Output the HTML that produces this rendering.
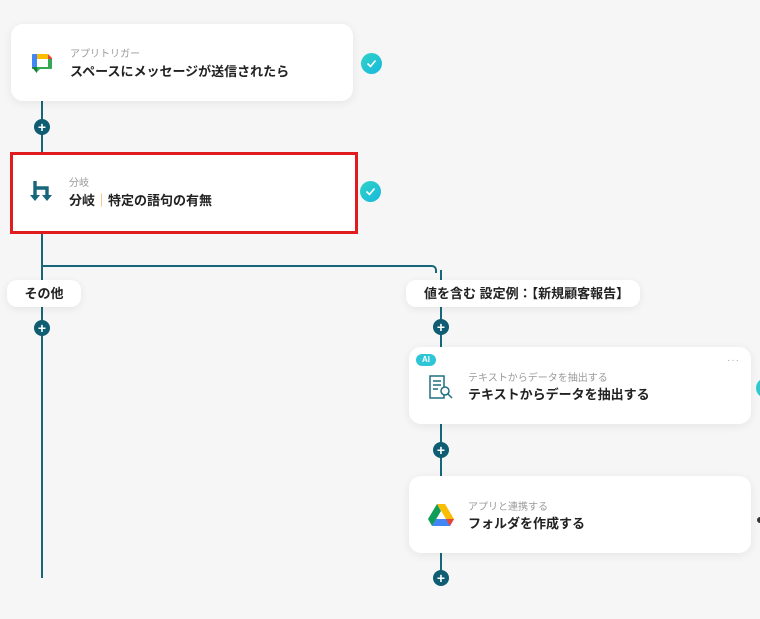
<!DOCTYPE html>
<html><head><meta charset="utf-8"><style>
body{margin:0;width:760px;height:619px;background:#f6f6f6;position:relative;overflow:hidden;font-family:"Liberation Sans","Noto Sans CJK JP",sans-serif;color:#222}
.abs{position:absolute}
.card{position:absolute;background:#fff;border-radius:12px;box-shadow:0 2px 10px rgba(0,0,0,0.07)}
.sub{position:absolute;font-size:10px;color:#9a9a9a}
.ttl{position:absolute;font-size:13px;font-weight:bold;color:#222;white-space:nowrap}
.vl{position:absolute;width:2px;background:#17667a}
.plus{position:absolute;width:16px;height:16px;border-radius:50%;background:#0f5d72;color:#fff;font-weight:bold;font-size:14px;line-height:16px;text-align:center}
.chk{position:absolute;width:21px;height:21px;border-radius:50%;background:linear-gradient(135deg,#2fd3c3,#18b8e0)}
.pill{position:absolute;background:#fff;border-radius:10px;box-shadow:0 2px 8px rgba(0,0,0,0.07);font-size:13px;font-weight:bold;height:27px;line-height:27px}
</style></head><body>
<div class="vl" style="left:41px;top:100px;height:54px"></div>
<div class="vl" style="left:41px;top:232px;height:346px"></div>
<div class="abs" style="left:41px;top:265px;width:394px;height:6px;border-top:2px solid #17667a;border-right:2px solid #17667a;border-top-right-radius:5px"></div>
<div class="vl" style="left:440px;top:270px;height:310px"></div>

<div class="card" style="left:11px;top:24px;width:342px;height:77px">
<svg class="abs" style="left:20px;top:29px" width="22" height="22" viewBox="0 0 22 22">
<path d="M1 2a1 1 0 0 1 1-1h4v13H1z" fill="#4285f4"/>
<path d="M6 1h11v5H6z" fill="#fbbc04"/>
<path d="M17 1l4 4v1h-4z" fill="#ea4335"/>
<path d="M17 6h4v9a1 1 0 0 1-1 1H9l-4 4v-4H1v-2h16z" fill="#34a853"/>
<path d="M1 14h5v6l-2-2z" fill="#188038"/>
</svg>
<div class="sub" style="left:59px;top:21px">アプリトリガー</div>
<div class="ttl" style="left:59px;top:37px">スペースにメッセージが送信されたら</div>
</div>
<div class="chk" style="left:361px;top:53px"><svg width="21" height="21"><path d="M6.5 10.5l3 3 5-6" stroke="#fff" stroke-width="1.6" fill="none"/></svg></div>
<div class="plus" style="left:34px;top:119px">+</div>

<div class="card" style="left:10px;top:152px;width:342px;height:76px;border:3px solid #e01c1c;border-radius:0;box-shadow:none"></div>
<svg class="abs" style="left:30px;top:180px" width="24" height="24" viewBox="0 0 24 24">
<path d="M5 1v16M5 8h12v9" stroke="#17667a" stroke-width="3.4" fill="none"/><path d="M0 15l5 6 5-6zM12 15l5 6 5-6z" fill="#17667a"/></svg>
<div class="sub" style="left:69px;top:174px">分岐</div>
<div class="ttl" style="left:69px;top:190px">分岐<span style="color:#f0a030;font-weight:normal">｜</span>特定の語句の有無</div>
<div class="chk" style="left:360px;top:181px"><svg width="21" height="21"><path d="M6.5 10.5l3 3 5-6" stroke="#fff" stroke-width="1.6" fill="none"/></svg></div>

<div class="pill" style="left:7px;top:280px;width:74px;text-align:center">その他</div>
<div class="plus" style="left:34px;top:320px">+</div>
<div class="pill" style="left:406px;top:280px;width:234px;padding-left:18px;box-sizing:border-box">値を含む 設定例：【新規顧客報告】</div>
<div class="plus" style="left:433px;top:319px">+</div>

<div class="card" style="left:409px;top:347px;width:342px;height:77px">
<div class="abs" style="left:7px;top:7px;width:20px;height:12px;border-radius:6px;background:#2ec6d6;color:#fff;font-size:8px;font-weight:bold;text-align:center;line-height:12px">AI</div>
<div class="abs" style="left:318px;top:8px;color:#aaa;font-size:10px;letter-spacing:1px">···</div>
<svg class="abs" style="left:19px;top:27px" width="26" height="26" viewBox="0 0 26 26">
<path d="M2 2h14v22H2z" stroke="#1f6e80" stroke-width="1.5" fill="none"/><path d="M5 7h8M5 11h8M5 15h5" stroke="#1f6e80" stroke-width="1.5"/><circle cx="17" cy="17" r="4" fill="#fff" stroke="#1f6e80" stroke-width="1.5"/><path d="M20 20l4 4" stroke="#1f6e80" stroke-width="1.5"/></svg>
<div class="sub" style="left:59px;top:22px">テキストからデータを抽出する</div>
<div class="ttl" style="left:59px;top:37px">テキストからデータを抽出する</div>
</div>
<div class="abs" style="left:756px;top:378px;width:20px;height:20px;border-radius:50%;background:#2fc8cf"></div>
<div class="plus" style="left:433px;top:442px">+</div>

<div class="card" style="left:409px;top:476px;width:342px;height:77px">
<svg class="abs" style="left:19px;top:28px" width="26" height="22" viewBox="0 0 26 22">
<path d="M9 0h8l9 15h-8z" fill="#fbbc04"/><path d="M9 0L0 15l4 7 9-15z" fill="#0f9d58"/><path d="M4 22h18l4-7H8z" fill="#4285f4"/><path d="M22 22l4-7h-8z" fill="#ea4335"/></svg>
<div class="sub" style="left:59px;top:22px">アプリと連携する</div>
<div class="ttl" style="left:59px;top:37px">フォルダを作成する</div>
</div>
<div class="abs" style="left:757px;top:517px;width:6px;height:6px;border-radius:50%;background:#333"></div>
<div class="plus" style="left:433px;top:570px">+</div>
</body></html>
